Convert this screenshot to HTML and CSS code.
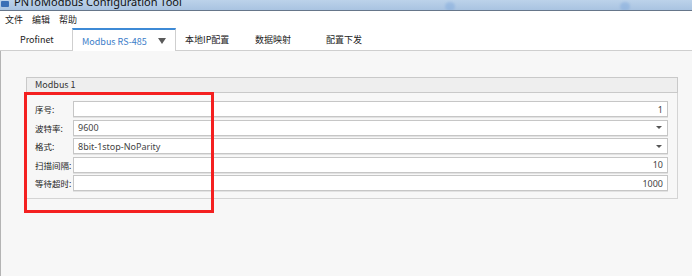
FILE: index.html
```html
<!DOCTYPE html>
<html lang="zh-CN">
<head>
	<meta charset="UTF-8">
	<title>PNToModbus Configuration Tool</title>
	<link rel="stylesheet" href="styles.css">
</head>
<body>
<div class="window">
	<div class="titlebar">
		<span class="app-icon"></span>
		<span class="title">PNToModbus Configuration Tool</span>
		<span class="blur-dot dot1"></span>
		<span class="blur-dot dot2"></span>
	</div>

	<div class="menubar">
		<span>文件</span>
		<span>编辑</span>
		<span>帮助</span>
	</div>

	<div class="tabs">
		<div class="tab first">Profinet</div>
		<div class="tab active">Modbus RS-485 <span class="tab-arrow"></span></div>
		<div class="tab">本地IP配置</div>
		<div class="tab">数据映射</div>
		<div class="tab">配置下发</div>
	</div>

	<main class="content">
		<section class="group">
			<div class="group-head">Modbus 1</div>
			<div class="group-body">
				<div class="row">
					<label>序号:</label>
					<div class="field num">1</div>
				</div>
				<div class="row">
					<label>波特率:</label>
					<div class="field combo">9600<span class="combo-arrow"></span></div>
				</div>
				<div class="row">
					<label>格式:</label>
					<div class="field combo">8bit-1stop-NoParity<span class="combo-arrow"></span></div>
				</div>
				<div class="row">
					<label>扫描间隔:</label>
					<div class="field num">10</div>
				</div>
				<div class="row">
					<label>等待超时:</label>
					<div class="field num">1000</div>
				</div>
			</div>
		</section>
	</main>

	<!-- red highlight drawn on top of the form -->
	<div class="highlight"></div>
</div>
</body>
</html>
```

FILE: styles.css
```css
html, body{
	margin: 0;
	padding: 0;
}

body{
	font-family: "Noto Sans CJK SC", "Noto Sans", sans-serif;
	font-size: 9px;
	color: #222;
	background: #f7f7f7;
}

.window{
	position: relative;
	width: 692px;
	height: 276px;
	display: flex;
	flex-direction: column;
	overflow: hidden;
}

/* title bar, cut off at the top */
.titlebar{
	position: relative;
	height: 10px;
	flex: none;
	background: linear-gradient(#bcd2ea, #a9c3e1);
	border-bottom: 1px solid #66768a;
	display: flex;
	align-items: flex-end;
	overflow: hidden;
}
.app-icon{
	width: 8px;
	height: 6px;
	margin: 0 5px 3px 1px;
	background: #3a6fb6;
	border-radius: 1px;
}
.title{
	font-family: "Noto Sans", sans-serif;
	font-size: 11px;
	line-height: 11px;
	color: #111;
	margin-bottom: 3px;
}
.blur-dot{
	position: absolute;
	top: 2px;
	width: 10px;
	height: 9px;
	border-radius: 50%;
	background: #7ea8dc;
	opacity: 0.45;
	filter: blur(1px);
}
.dot1{ left: 445px; }
.dot2{ left: 620px; }

.menubar{
	height: 17px;
	flex: none;
	background: #fff;
	display: flex;
	align-items: center;
	gap: 9px;
	padding-left: 5px;
	font-size: 9px;
}

/* tabs */
.tabs{
	height: 22px;
	flex: none;
	background: #fff;
	border-bottom: 1px solid #cfcfcf;
	display: flex;
}
.tab{
	box-sizing: border-box;
	height: 22px;
	display: flex;
	align-items: center;
	padding-left: 9px;
	width: 70px;
	color: #222;
}
.tab:nth-child(4){ width: 71px; }
.tab.first{
	width: 72px;
	padding-left: 20px;
}
.tab.active{
	width: 104px;
	height: 23px;
	padding-top: 1px;
	border-top: 2px solid #3d8ad6;
	border-left: 1px solid #cfcfcf;
	border-right: 1px solid #cfcfcf;
	color: #3a7cc8;
	background: #fff;
	position: relative;
	z-index: 1;
}
.tab-arrow{
	margin-left: 11px;
	width: 0;
	height: 0;
	border-left: 4px solid transparent;
	border-right: 4px solid transparent;
	border-top: 6px solid #5a5a5a;
}

.content{
	flex: 1;
	background: #f7f7f7;
	border-left: 1px solid #b4b4b4;
	padding: 26px 14px 0 25px;
}

/* group box */
.group-head{
	height: 14px;
	line-height: 14px;
	border: 1px solid #c9c9c9;
	background: #eeeeee;
	padding-left: 8px;
	color: #333;
}
.group-body{
	border: 1px solid #d4d4d4;
	border-top: none;
	padding: 8px 9px 7px 8px;
	display: flex;
	flex-direction: column;
	gap: 2.5px;
}
.row{
	display: flex;
	align-items: center;
}
.row label{
	width: 38px;
	flex: none;
	font-size: 8.5px;
	color: #222;
}
.field{
	box-sizing: border-box;
	flex: 1;
	height: 16px;
	background: #fff;
	border: 1px solid #c6c6c6;
	box-shadow: 0 1px 0 #e2e2e2;
	display: flex;
	align-items: center;
	padding: 0 4px;
	color: #444;
	font-family: "Noto Sans", sans-serif;
	font-size: 9px;
}
.field.num{
	justify-content: flex-end;
}
.field.combo{
	justify-content: space-between;
}
.combo-arrow{
	width: 0;
	height: 0;
	margin-right: 1px;
	border-left: 3px solid transparent;
	border-right: 3px solid transparent;
	border-top: 3px solid #555;
}

.highlight{
	position: absolute;
	left: 24px;
	top: 92px;
	width: 184px;
	height: 115px;
	border: 3px solid #f42020;
}
```
